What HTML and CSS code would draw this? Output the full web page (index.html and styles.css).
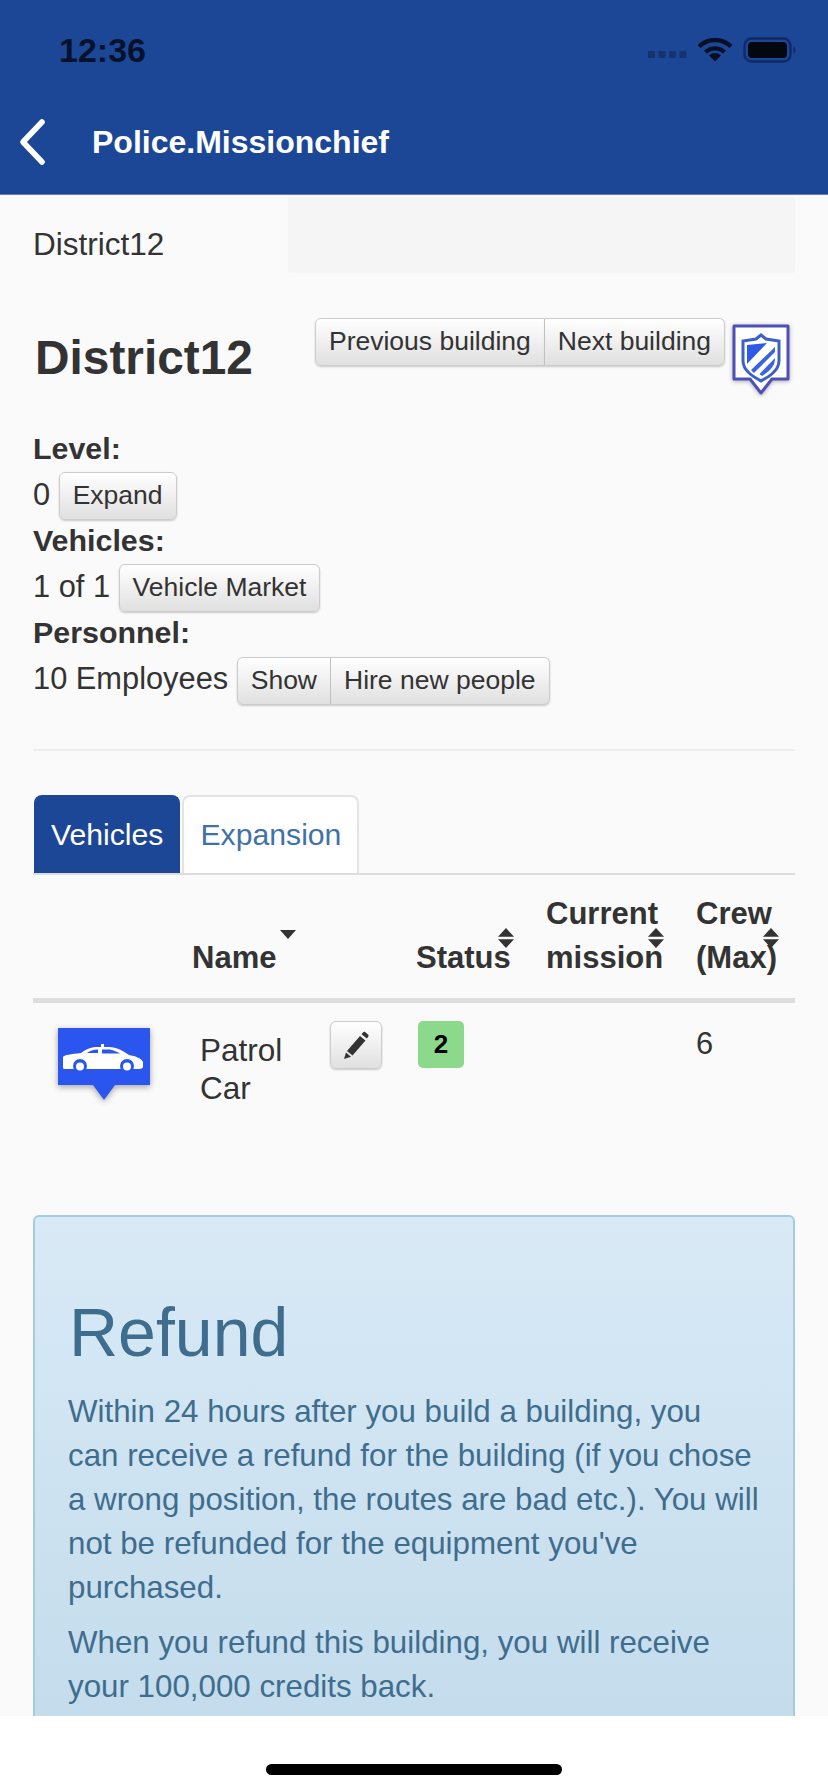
FILE: index.html
```html
<!DOCTYPE html>
<html lang="en">
<head>
    <meta charset="UTF-8">
    <meta name="viewport" content="width=device-width, initial-scale=1.0">
    <title>Police.Missionchief</title>
    <link rel="stylesheet" href="styles.css">
</head>
<body>
    <div class="app">
        <header class="app-header">
            <div class="status-bar">
                <span class="time">12:36</span>
                <div class="status-icons">
                    <svg class="signal" width="39" height="8" viewBox="0 0 39 8">
                        <rect x="0" y="0" width="7" height="7" rx="1"/>
                        <rect x="10.5" y="0" width="7" height="7" rx="1"/>
                        <rect x="21" y="0" width="7" height="7" rx="1"/>
                        <rect x="31.5" y="0" width="7" height="7" rx="1"/>
                    </svg>
                    <svg class="wifi" width="34" height="24" viewBox="0 0 34 24">
                        <path d="M1 8.5 A23 23 0 0 1 33 8.5" fill="none" stroke="#050f24" stroke-width="4.4"/>
                        <path d="M7.5 14 A14 14 0 0 1 26.5 14" fill="none" stroke="#050f24" stroke-width="4.2"/>
                        <path d="M17 23.5 L11 17.5 A8.5 8.5 0 0 1 23 17.5 Z" fill="#050f24"/>
                    </svg>
                    <svg class="battery" width="54" height="26" viewBox="0 0 54 26">
                        <rect x="1.5" y="1.5" width="46" height="23" rx="7" fill="none" stroke="#0f2a66" stroke-width="2.4"/>
                        <rect x="5" y="5" width="39" height="16" rx="4" fill="#03070f"/>
                        <path d="M50.5 9 a5 5 0 0 1 0 8 Z" fill="#0f2a66"/>
                    </svg>
                </div>
            </div>
            <div class="nav-bar">
                <svg class="back" width="30" height="48" viewBox="0 0 30 48">
                    <path d="M25 4 L6 24 L25 44" fill="none" stroke="#fff" stroke-width="5.6" stroke-linecap="round" stroke-linejoin="round"/>
                </svg>
                <span class="nav-title">Police.Missionchief</span>
            </div>
        </header>

        <main class="content">
            <div class="breadcrumb-row">
                <span class="breadcrumb-text">District12</span>
                <div class="breadcrumb-box"></div>
            </div>

            <div class="page-head">
                <h1 class="building-name">District12</h1>
                <div class="head-actions">
                    <div class="btn-group">
                        <a class="btn" href="#">Previous building</a>
                        <a class="btn" href="#">Next building</a>
                    </div>
                    <svg class="marker" width="62" height="74" viewBox="0 0 62 74">
                        <path d="M4 3 H58 V56 H42 L31 70 L20 56 H4 Z" fill="#fff" stroke="#4f4fb8" stroke-width="3" stroke-linejoin="round"/>
                        <path d="M31 12 L36 16 L49 18 V38 C49 48 38 54 31 58 C24 54 13 48 13 38 V18 L26 16 Z" fill="#fff" stroke="#3f5fc8" stroke-width="3"/>
                        <path d="M17 22 L37 20 L17 41 Z" fill="#2f5ae8"/>
                        <path d="M45 24 V29 L24 50 L21 47 Z M45 36 C45 44 38 49 32 53 L29.5 51 L45 35 Z" fill="#3a63dc"/>
                    </svg>
                </div>
            </div>

            <dl class="facts">
                <dt>Level:</dt>
                <dd>0 <a class="btn" href="#">Expand</a></dd>
                <dt>Vehicles:</dt>
                <dd>1 of 1 <a class="btn" href="#">Vehicle Market</a></dd>
                <dt>Personnel:</dt>
                <dd>10 Employees
                    <span class="btn-group">
                        <a class="btn" href="#">Show</a>
                        <a class="btn" href="#">Hire new people</a>
                    </span>
                </dd>
            </dl>

            <hr class="divider">

            <ul class="tabs">
                <li class="tab active"><a href="#">Vehicles</a></li>
                <li class="tab"><a href="#">Expansion</a></li>
            </ul>

            <table class="vehicle-table">
                <thead>
                    <tr>
                        <th class="col-icon"></th>
                        <th class="col-name">Name<span class="sort-down"></span></th>
                        <th class="col-status">Status<span class="sort-both"></span></th>
                        <th class="col-mission">Current mission<span class="sort-both"></span></th>
                        <th class="col-crew">Crew (Max)<span class="sort-both"></span></th>
                    </tr>
                </thead>
                <tbody>
                    <tr>
                        <td>
                            <svg class="car-marker" width="94" height="76" viewBox="0 0 94 76">
                                <path d="M1 1 H93 V58 H58 L47 73 L36 58 H1 Z" fill="#2a55ee"/>
                                <path d="M6 30 C7 28 14 27 24 26 C28 23 33 20.500 38 20 H44 V17 H47 V20 H52 C60 20 66 24 72 28 C78 29 84 31 86 35 V40 C86 41 84 42 82 42 H7 C6 42 6 41 6 39 Z" fill="#fff"/>
                                <circle cx="23" cy="39" r="7" fill="#2a55ee"/>
                                <circle cx="70" cy="39" r="7" fill="#2a55ee"/>
                                <circle cx="23" cy="39.500" r="4" fill="#fff"/>
                                <circle cx="70" cy="39.500" r="4" fill="#fff"/>
                                <path d="M30 26 C33 24 36 22.500 41 22.500 V26 Z M45 22.500 H53 C57 23 60 25 63 26.500 H45 Z" fill="#2a55ee"/>
                            </svg>
                        </td>
                        <td>
                            <div class="name-cell">
                                <span class="vehicle-name">Patrol Car</span>
                                <a class="btn btn-icon" href="#">
                                    <svg width="26" height="28" viewBox="0 0 26 28">
                                        <path d="M4 20 L17 5 L22.5 9.5 L9.5 24.5 Z M18.5 3.2 L20 1.5 C20.8 .7 21.6 .7 22.4 1.3 L25 3.5 C25.7 4.2 25.8 5 25 5.9 L23.8 7.4 Z M3 21.5 L8 25.8 L1 28 Z" fill="#333"/>
                                    </svg>
                                </a>
                            </div>
                        </td>
                        <td><span class="status-badge">2</span></td>
                        <td></td>
                        <td class="crew-cell">6</td>
                    </tr>
                </tbody>
            </table>

            <section class="refund">
                <h2>Refund</h2>
                <p>Within 24 hours after you build a building, you can receive a refund for the building (if you chose a wrong position, the routes are bad etc.). You will not be refunded for the equipment you've purchased.</p>
                <p>When you refund this building, you will receive your 100,000 credits back.</p>
            </section>
        </main>

        <div class="home-bar"><span class="home-indicator"></span></div>
    </div>
</body>
</html>
```

FILE: styles.css
```css
* {
    margin: 0;
    padding: 0;
    box-sizing: border-box;
}

html, body {
    height: 100%;
}

body {
    font-family: "Liberation Sans", Arial, sans-serif;
    font-size: 30.8px;
    line-height: 44px;
    color: #333;
    background-color: #fafafa;
    overflow: hidden;
}

a {
    text-decoration: none;
}

.app {
    display: flex;
    flex-direction: column;
    height: 1792px;
}

/* header */
.app-header {
    flex: none;
    height: 195px;
    background-color: #1c4796;
    border-bottom: 1px solid #5f80b8;
}

.status-bar {
    display: flex;
    justify-content: space-between;
    align-items: center;
    height: 100px;
    padding: 0 31px 0 59px;
}

.time {
    font-size: 34px;
    font-weight: bold;
    color: #06122c;
}

.status-icons {
    display: flex;
    align-items: center;
    gap: 11px;
}

.signal {
    fill: #15336f;
    margin-top: 10px;
}

.nav-bar {
    display: flex;
    align-items: center;
    gap: 45px;
    height: 84px;
    padding-left: 17px;
}

.nav-title {
    font-size: 32px;
    font-weight: bold;
    color: #fff;
}

/* breadcrumb */
.content {
    flex: 1;
    min-height: 0;
    overflow: hidden;
    padding: 2px 33px 0;
}

.breadcrumb-row {
    display: flex;
    height: 76px;
}

.breadcrumb-text {
    width: 255px;
    padding-top: 25px;
    font-size: 31.5px;
}

.breadcrumb-box {
    flex: 1;
    height: 76px;
    background-color: #f5f5f5;
    border-radius: 3px;
}

/* title + buttons */
.page-head {
    display: flex;
    justify-content: space-between;
    margin-top: 45px;
    height: 102px;
}

.building-name {
    font-size: 47.8px;
    line-height: 50px;
    margin-top: 15px;
    margin-left: 2px;
}

.head-actions {
    display: flex;
    align-items: flex-start;
    gap: 5px;
    margin-right: 3px;
}

.marker {
    margin-top: 5px;
    filter: drop-shadow(0 1px 2px rgba(0, 0, 0, 0.3));
}

.btn {
    display: inline-block;
    height: 48px;
    padding: 0 13px;
    font-size: 26.5px;
    line-height: 44px;
    color: #333;
    background: linear-gradient(to bottom, #fff, #e0e0e0);
    border: 1px solid #ccc;
    border-radius: 6px;
    box-shadow: 0 1px 2px rgba(0, 0, 0, 0.2);
    white-space: nowrap;
}

.btn-group {
    display: inline-flex;
}

.btn-group .btn:first-child {
    border-radius: 6px 0 0 6px;
}

.btn-group .btn:last-child {
    border-left: none;
    border-radius: 0 6px 6px 0;
}

/* level / vehicles / personnel */
.facts {
    margin-top: 6px;
}

.facts dt {
    font-weight: bold;
    font-size: 30.4px;
    height: 44px;
    line-height: 44px;
}

.facts dd {
    height: 48px;
    line-height: 50px;
    font-size: 30.8px;
}

.facts dd .btn {
    vertical-align: top;
    margin-top: 2px;
}

.divider {
    margin-top: 47px;
    border: none;
    border-top: 2px solid #eee;
}

/* tabs */
.tabs {
    display: flex;
    gap: 2px;
    margin-top: 44px;
    padding-left: 1px;
    height: 80px;
    list-style: none;
    border-bottom: 2px solid #ddd;
}

.tab a {
    display: block;
    height: 78px;
    padding: 0 16px;
    font-size: 30.2px;
    line-height: 76px;
    color: #3f72a8;
    background-color: #fff;
    border: 2px solid #e4e4e4;
    border-bottom: none;
    border-radius: 8px 8px 0 0;
}

.tab.active a {
    padding: 0 15px;
    color: #fff;
    background-color: #1c4796;
    border-color: #1c4796;
}

/* table */
.vehicle-table {
    width: 762px;
    table-layout: fixed;
    border-collapse: collapse;
}

.vehicle-table th {
    position: relative;
    height: 125px;
    padding: 12px 8px 18px;
    text-align: left;
    vertical-align: bottom;
    font-size: 31px;
    line-height: 44px;
    border-bottom: 5px solid #ddd;
}

.vehicle-table td {
    height: 168px;
    padding: 18px 8px;
    vertical-align: top;
}

.col-icon { width: 151px; }
.col-name { width: 224px; }
.col-status { width: 130px; }
.col-mission { width: 150px; }
.col-crew { width: 107px; }

.sort-down,
.sort-both {
    position: absolute;
    top: 55px;
    width: 16px;
}

.sort-down {
    left: 96px;
    height: 9px;
    background-color: #333;
    clip-path: polygon(0 0, 100% 0, 50% 100%);
}

.sort-both {
    height: 20px;
    margin-top: -2px;
    background-color: #333;
    clip-path: polygon(50% 0, 100% 44%, 0 44%, 0 56%, 100% 56%, 50% 100%, 0 56%, 0 44%);
}

.col-status .sort-both { left: 90px; }
.col-mission .sort-both { left: 110px; }
.col-crew .sort-both { left: 75px; }

.car-marker {
    display: block;
    margin: 6px 0 0 16px;
    filter: drop-shadow(0 2px 3px rgba(0, 0, 0, 0.35));
}

.name-cell {
    display: flex;
    align-items: flex-start;
    margin-left: 8px;
}

.vehicle-name {
    width: 130px;
    font-size: 31.5px;
    line-height: 38px;
    margin-top: 10px;
}

.btn-icon {
    display: flex;
    align-items: center;
    justify-content: center;
    width: 52px;
    height: 48px;
    padding: 0;
}

.status-badge {
    display: block;
    width: 46px;
    height: 47px;
    font-size: 26px;
    font-weight: bold;
    line-height: 46px;
    text-align: center;
    color: #000;
    background-color: #8dd98c;
    border-radius: 5px;
    margin-left: 2px;
}

.crew-cell {
    line-height: 46px;
}

/* refund box */
.refund {
    margin-top: 47px;
    padding: 78px 33px 100px;
    color: #3f6d8e;
    font-size: 31.3px;
    background: linear-gradient(to bottom, #d9eaf6, #bfd9ea);
    border: 2px solid #a5cbe2;
    border-radius: 6px;
}

.refund h2 {
    font-size: 68px;
    font-weight: normal;
    line-height: 74px;
    margin-bottom: 21px;
    margin-left: 1px;
}

.refund p {
    margin-bottom: 11px;
}

/* bottom */
.home-bar {
    flex: none;
    display: flex;
    justify-content: center;
    height: 76px;
    padding-top: 48px;
    background-color: #fff;
}

.home-indicator {
    width: 296px;
    height: 11px;
    background-color: #000;
    border-radius: 6px;
}
```
